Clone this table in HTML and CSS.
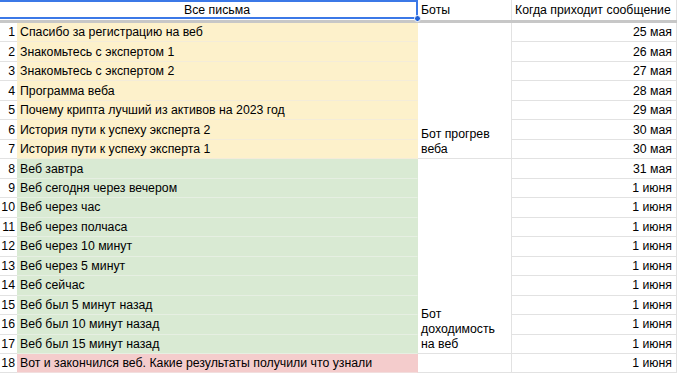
FILE: index.html
```html
<!DOCTYPE html>
<html lang="ru">
<head>
<meta charset="utf-8">
<link rel="stylesheet" href="styles.css">
</head>
<body>
<div class="sheet">
  <div class="hd hd-main">Все письма<span class="sel"><span class="handle"></span></span></div>
  <div class="hd hd-left">Боты</div>
  <div class="hd hd-left">Когда приходит сообщение</div>
  <div class="freeze"></div>

  <div class="num">1</div><div class="c y">Спасибо за регистрацию на веб</div><div class="bot bot1">Бот прогрев веба</div><div class="d">25 мая</div>
  <div class="num">2</div><div class="c y">Знакомьтесь с экспертом 1</div><div class="d">26 мая</div>
  <div class="num">3</div><div class="c y">Знакомьтесь с экспертом 2</div><div class="d">27 мая</div>
  <div class="num">4</div><div class="c y">Программа веба</div><div class="d">28 мая</div>
  <div class="num">5</div><div class="c y">Почему крипта лучший из активов на 2023 год</div><div class="d">29 мая</div>
  <div class="num">6</div><div class="c y">История пути к успеху эксперта 2</div><div class="d">30 мая</div>
  <div class="num">7</div><div class="c y">История пути к успеху эксперта 1</div><div class="d">30 мая</div>
  <div class="num">8</div><div class="c g">Веб завтра</div><div class="bot bot2">Бот доходимость на веб</div><div class="d">31 мая</div>
  <div class="num">9</div><div class="c g">Веб сегодня через вечером</div><div class="d">1 июня</div>
  <div class="num">10</div><div class="c g">Веб через час</div><div class="d">1 июня</div>
  <div class="num">11</div><div class="c g">Веб через полчаса</div><div class="d">1 июня</div>
  <div class="num">12</div><div class="c g">Веб через 10 минут</div><div class="d">1 июня</div>
  <div class="num">13</div><div class="c g">Веб через 5 минут</div><div class="d">1 июня</div>
  <div class="num">14</div><div class="c g">Веб сейчас</div><div class="d">1 июня</div>
  <div class="num">15</div><div class="c g">Веб был 5 минут назад</div><div class="d">1 июня</div>
  <div class="num">16</div><div class="c g">Веб был 10 минут назад</div><div class="d">1 июня</div>
  <div class="num">17</div><div class="c g">Веб был 15 минут назад</div><div class="d">1 июня</div>
  <div class="num">18</div><div class="c r">Вот и закончился веб. Какие результаты получили что узнали</div><div class="bot"></div><div class="d">1 июня</div>
</div>
</body>
</html>
```
FILE: styles.css
```css
* { box-sizing: border-box; }
html, body { margin: 0; padding: 0; background: #fff; }
body {
  font-family: "Liberation Sans", Arial, sans-serif;
  font-size: 12.3px;
  color: #000;
  width: 677px;
  height: 373px;
  overflow: hidden;
}
.sheet {
  display: grid;
  grid-template-columns: 17px 401px 94px 165px;
  grid-template-rows: 20px 3px repeat(18, 19.47px);
  position: relative;
}
.hd {
  display: flex;
  align-items: center;
  border-right: 1px solid #e2e2e2;
  white-space: nowrap;
}
.hd-main {
  grid-column: 1 / 3;
  justify-content: center;
  position: relative;
  padding-left: 17px;
}
.hd-left { padding-left: 3px; }
.sel {
  position: absolute;
  left: -2px;
  top: 0;
  right: -1px;
  bottom: 1px;
  border: 2px solid #3b78e7;
}
.handle {
  position: absolute;
  right: -5px;
  bottom: -5px;
  width: 7px;
  height: 7px;
  border-radius: 50%;
  background: #1f5fd6;
  border: 1px solid #fff;
}
.freeze {
  grid-column: 1 / 5;
  background: #c7c7c7;
}
.num, .c, .d, .bot {
  border-bottom: 1px solid #e2e2e2;
  border-right: 1px solid #e2e2e2;
  white-space: nowrap;
  overflow: hidden;
}
.num {
  display: flex;
  align-items: center;
  justify-content: flex-end;
  padding-right: 2px;
  border-right: none;
}
.c {
  display: flex;
  align-items: center;
  padding-left: 3px;
  border-right-color: transparent;
}
.y { background: #fdf1cb; border-bottom-color: #f4ecd9; }
.g { background: #d9ead3; border-bottom-color: #e6efe2; }
.r { background: #f4cccc; border-bottom-color: #f2dede; }
.d {
  display: flex;
  align-items: center;
  justify-content: flex-end;
  padding-right: 4px;
}
.bot {
  display: flex;
  align-items: flex-end;
  padding: 0 3px 1px;
  white-space: normal;
  line-height: 15px;
}
.bot1 { grid-row: span 7; }
.bot2 { grid-row: span 10; }
```
